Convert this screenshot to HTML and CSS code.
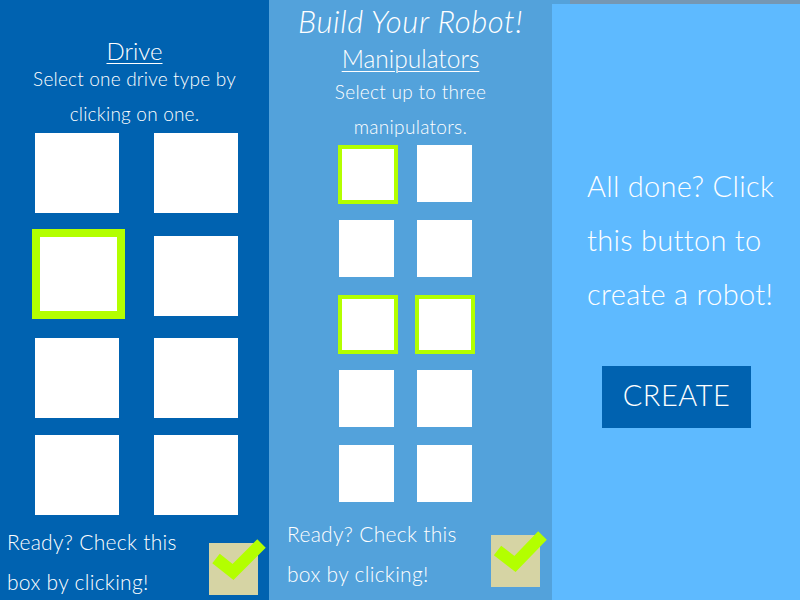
FILE: index.html
```html
<!DOCTYPE html>
<html lang="en">
<head>
<meta charset="utf-8">
<title>Build Your Robot!</title>
<link rel="stylesheet" href="styles.css">
</head>
<body>
<div class="app">
  <section class="panel drive">
    <h2 class="heading">Drive</h2>
    <p class="hint">Select one drive type by<br>clicking on one.</p>
    <div class="drive-grid">
      <div class="tile"></div>
      <div class="tile"></div>
      <div class="tile selected"></div>
      <div class="tile"></div>
      <div class="tile"></div>
      <div class="tile"></div>
      <div class="tile"></div>
      <div class="tile"></div>
    </div>
    <div class="ready">
      <p class="ready-text">Ready? Check this<br>box by clicking!</p>
      <div class="checkbox">
        <svg class="check" viewBox="0 0 49 52" width="49" height="52"><polyline points="7,15.5 24,29 52.5,0.5" /></svg>
      </div>
    </div>
  </section>
  <section class="panel manip">
    <h1 class="title">Build Your Robot!</h1>
    <h2 class="heading small">Manipulators</h2>
    <p class="hint small">Select up to three<br>manipulators.</p>
    <div class="manip-grid">
      <div class="mtile selected"></div>
      <div class="mtile"></div>
      <div class="mtile"></div>
      <div class="mtile"></div>
      <div class="mtile selected"></div>
      <div class="mtile selected right"></div>
      <div class="mtile"></div>
      <div class="mtile"></div>
      <div class="mtile"></div>
      <div class="mtile"></div>
    </div>
    <div class="ready">
      <p class="ready-text">Ready? Check this<br>box by clicking!</p>
      <div class="checkbox">
        <svg class="check" viewBox="0 0 49 52" width="49" height="52"><polyline points="6.5,15.5 24,29 51.5,0.5" /></svg>
      </div>
    </div>
  </section>
  <div class="side">
    <section class="panel create">
      <p class="done">All done? Click<br>this button to<br>create a robot!</p>
      <button class="create-btn">CREATE</button>
    </section>
  </div>
</div>
</body>
</html>
```

FILE: styles.css
```css
* { box-sizing: content-box; }
html, body {
  margin: 0;
  padding: 0;
}
body {
  width: 800px;
  height: 600px;
  overflow: hidden;
  background: #7597b3;
  font-family: "Lato", "Open Sans", sans-serif;
  font-weight: 300;
  color: #ffffff;
}
.app {
  display: flex;
  height: 600px;
}
.panel {
  display: flex;
  flex-direction: column;
  height: 600px;
  flex-shrink: 0;
}
.drive {
  width: 269px;
  background: #0062b0;
  align-items: stretch;
}
.heading {
  margin: 40px 0 0;
  font-size: 24px;
  line-height: 21px;
  font-weight: 300;
  text-align: center;
  text-decoration: underline;
  text-decoration-thickness: 1px;
  text-underline-offset: 3px;
}
.hint {
  margin: 0;
  font-size: 19px;
  line-height: 35px;
  text-align: center;
  letter-spacing: 0.2px;
}
.drive-grid {
  display: grid;
  grid-template-columns: 84px 84px;
  grid-template-rows: 103px 102px 97px 80px;
  column-gap: 35px;
  padding-left: 35px;
  margin-top: 2px;
  align-items: start;
}
.tile {
  width: 84px;
  height: 80px;
  background: #ffffff;
}
.tile.selected {
  width: 77px;
  height: 74px;
  border: 8px solid #b3ff00;
  margin: -7px 0 0 -3px;
}
.ready {
  display: flex;
  justify-content: space-between;
  align-items: flex-start;
  margin-top: 7px;
  padding: 0 11px 0 7px;
}
.ready-text {
  margin: 0;
  font-size: 21px;
  line-height: 40px;
  letter-spacing: 0.3px;
}
.checkbox {
  position: relative;
  width: 49px;
  height: 52px;
  margin-top: 21px;
  background: #d6d4a4;
}
.check {
  position: absolute;
  left: 0;
  top: 0;
  overflow: visible;
}
.check polyline {
  fill: none;
  stroke: #b3ff00;
  stroke-width: 12;
  stroke-linejoin: miter;
  stroke-linecap: butt;
}
.manip {
  width: 283px;
  background: #53a2db;
}
.title {
  margin: 0;
  font-size: 31px;
  line-height: 42px;
  font-style: italic;
  font-weight: 300;
  text-align: center;
  letter-spacing: 0.6px;
}
.heading.small {
  margin-top: 1px;
  font-size: 24.5px;
  line-height: 31px;
}
.hint.small {
  font-size: 19px;
  line-height: 35px;
  letter-spacing: 0.3px;
}
.manip-grid {
  display: grid;
  grid-template-columns: 55px 55px;
  grid-auto-rows: 57px;
  column-gap: 23px;
  row-gap: 18px;
  padding-left: 70px;
  margin-top: 1px;
  align-items: start;
}
.mtile {
  width: 55px;
  height: 57px;
  background: #ffffff;
}
.mtile.selected {
  width: 52px;
  height: 51px;
  border: 4px solid #b3ff00;
  margin-left: -1px;
}
.mtile.selected.right {
  margin-left: -2px;
}
.manip .ready {
  margin-top: 12px;
  padding: 0 12px 0 18px;
}
.side {
  width: 248px;
  height: 600px;
  flex-shrink: 0;
  background: linear-gradient(to right, #53a2db 18px, #7597b3 18px);
  display: flex;
  flex-direction: column;
}
.create {
  margin-top: 4px;
  height: 596px;
  background: #5ebaff;
}
.done {
  margin: 155px 0 0 35px;
  font-size: 29px;
  line-height: 54px;
  letter-spacing: 0.3px;
}
.create-btn {
  margin: 45px 0 0 50px;
  width: 149px;
  height: 56px;
  border: none;
  padding: 0 0 6px;
  background: #0062b0;
  color: #ffffff;
  font-family: "Lato", "Open Sans", sans-serif;
  font-weight: 300;
  font-size: 29px;
  letter-spacing: 0.5px;
}
```
